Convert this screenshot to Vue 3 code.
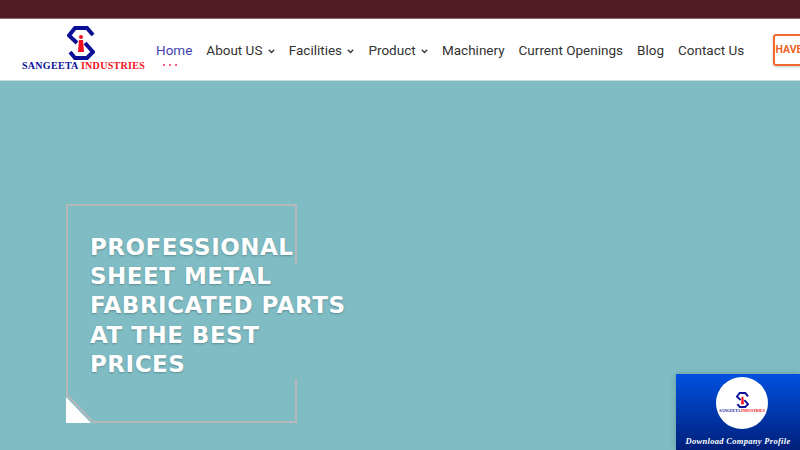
<template>
  <div class="page">
    <div class="topbar"></div>

    <header class="header">
      <a class="logo" href="#">
        <svg class="logo-mark" width="28" height="34" viewBox="0 0 28 34">
          <path d="M26 9 L20 2 L8 2 L2 9.5 L10 17" fill="none" stroke="#0a0f96" stroke-width="4" />
          <path d="M18 17 L26 26 L20 32 L8 32 L3 26" fill="none" stroke="#0a0f96" stroke-width="4" />
          <circle cx="14" cy="11" r="2" fill="#f01020" />
          <path d="M12 14 L16 14 L17 26 L11 26 Z" fill="#f01020" />
        </svg>
        <div class="logo-text">SANGEETA <span>INDUSTRIES</span></div>
      </a>

      <nav class="nav">
        <a v-for="item in menu" :key="item.label" href="#" class="nav-item" :class="{ active: item.active }">
          {{ item.label }}
          <svg v-if="item.sub" class="chevron" width="7" height="5" viewBox="0 0 7 5">
            <path d="M0.8 0.8 L3.5 3.5 L6.2 0.8" fill="none" stroke="#333" stroke-width="1.3" />
          </svg>
          <span v-if="item.active" class="dots"><i></i><i></i><i></i></span>
        </a>
      </nav>

      <a class="ask" href="#">HAVE ANY QUESTIONS?</a>
    </header>

    <section class="hero">
      <div class="frame">
        <svg class="frame-lines" width="231" height="219" viewBox="0 0 231 219">
          <path d="M230 60 L230 1 L1 1 L1 191 L27 218 L230 218 L230 175" fill="none" stroke="#b4b8ba" stroke-width="2" />
          <path d="M0 193 L0 219 L25 219 Z" fill="#fff" />
        </svg>
        <h1 class="title">PROFESSIONAL SHEET METAL FABRICATED PARTS AT THE BEST PRICES</h1>
      </div>

      <a class="profile" href="#">
        <div class="circle">
          <svg width="13" height="16" viewBox="0 0 28 34">
            <path d="M26 9 L20 2 L8 2 L2 9.5 L10 17" fill="none" stroke="#0a0f96" stroke-width="4" />
            <path d="M18 17 L26 26 L20 32 L8 32 L3 26" fill="none" stroke="#0a0f96" stroke-width="4" />
            <path d="M12 10 L16 10 L17 26 L11 26 Z" fill="#f01020" />
          </svg>
          <div class="circle-text">SANGEETA <span>INDUSTRIES</span></div>
        </div>
        <div class="profile-label">Download Company Profile</div>
      </a>
    </section>
  </div>
</template>

<script setup>
const menu = [
  { label: 'Home', active: true },
  { label: 'About US', sub: true },
  { label: 'Facilities', sub: true },
  { label: 'Product', sub: true },
  { label: 'Machinery' },
  { label: 'Current Openings' },
  { label: 'Blog' },
  { label: 'Contact Us' }
]
</script>

<style>
html,
body {
  margin: 0;
  overflow: hidden;
}
</style>

<style scoped>
.page {
  width: 800px;
  height: 450px;
  display: flex;
  flex-direction: column;
  overflow: hidden;
  font-family: "Open Sans", sans-serif;
}

a {
  text-decoration: none;
}

.topbar {
  height: 18px;
  background: #521c24;
  border-bottom: 1px solid #8a6a6e;
}

.header {
  height: 61px;
  background: #fff;
  border-bottom: 1px solid #c5dde0;
  display: flex;
  align-items: center;
  padding-left: 21px;
}

.logo {
  width: 125px;
  flex: none;
  display: flex;
  flex-direction: column;
  align-items: center;
  margin-top: -1px;
}

.logo-mark {
  margin-left: -5px;
}

.logo-text {
  font-family: "Liberation Serif", serif;
  font-weight: 700;
  font-size: 10px;
  line-height: 12px;
  letter-spacing: 0.3px;
  color: #0a0f96;
  white-space: nowrap;
}

.logo-text span {
  color: #f01020;
}

.nav {
  flex: none;
  display: flex;
  gap: 14px;
  margin-left: 10px;
  margin-right: 29px;
}

.nav-item {
  position: relative;
  font-family: "Liberation Sans Narrow", "Roboto", sans-serif;
  font-size: 13.5px;
  line-height: 18px;
  color: #333;
  white-space: nowrap;
}

.nav-item.active {
  color: #3f3fb0;
}

.chevron {
  margin-left: 2px;
  vertical-align: 1px;
}

.dots {
  position: absolute;
  left: 7px;
  top: 23px;
  display: flex;
  gap: 4px;
}

.dots i {
  width: 2px;
  height: 2px;
  border-radius: 50%;
  background: #f02a55;
}

.ask {
  flex: none;
  width: 120px;
  height: 32px;
  box-sizing: border-box;
  border: 2px solid #f06a30;
  border-radius: 3px;
  box-shadow: 0 1px 3px rgba(0, 0, 0, 0.2);
  display: flex;
  align-items: center;
  justify-content: center;
  font-family: "Liberation Sans Narrow", "Roboto", sans-serif;
  font-size: 10.5px;
  font-weight: 700;
  color: #ef6428;
  white-space: nowrap;
}

.hero {
  position: relative;
  flex: 1;
  background: #7fbcc4;
  padding: 123px 0 0 66px;
}

.frame {
  position: relative;
  width: 231px;
  height: 219px;
}

.frame-lines {
  position: absolute;
  left: 0;
  top: 0;
}

.title {
  position: relative;
  width: 262px;
  margin: 0;
  padding: 29px 0 0 24px;
  font-family: "DejaVu Sans", sans-serif;
  font-size: 23px;
  font-weight: 700;
  line-height: 29.2px;
  letter-spacing: 0.5px;
  color: #fff;
  text-shadow: 0 1px 2px rgba(0, 0, 0, 0.25);
}

.profile {
  position: absolute;
  right: 0;
  bottom: 0;
  width: 124px;
  height: 76px;
  background: linear-gradient(#0050e0, #00207a);
  box-shadow: 0 0 6px rgba(0, 0, 0, 0.2);
  display: flex;
  flex-direction: column;
  align-items: center;
}

.circle {
  width: 52px;
  height: 52px;
  margin: 3px 0 0 8px;
  border-radius: 50%;
  background: #fff;
  display: flex;
  flex-direction: column;
  align-items: center;
  justify-content: center;
}

.circle-text {
  font-family: "Liberation Serif", serif;
  font-size: 3.9px;
  font-weight: 700;
  line-height: 6px;
  color: #0a0f96;
  white-space: nowrap;
}

.circle-text span {
  color: #f01020;
}

.profile-label {
  margin-top: 7px;
  font-family: "Liberation Serif", serif;
  font-size: 8.5px;
  font-style: italic;
  font-weight: 700;
  letter-spacing: 0.3px;
  color: #fff;
  white-space: nowrap;
}
</style>
